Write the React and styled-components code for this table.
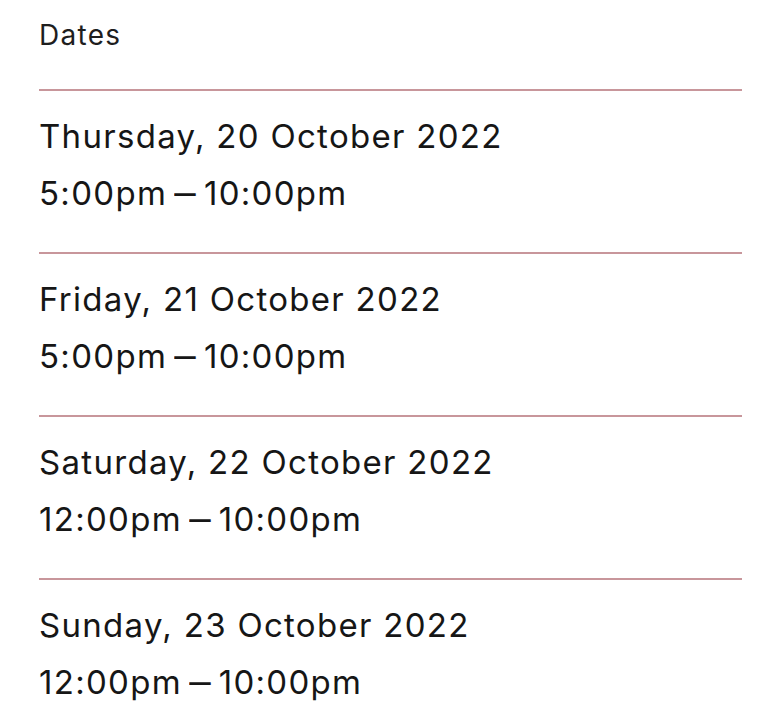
import React from "react";
import styled, { createGlobalStyle } from "styled-components";

const Global = createGlobalStyle`
  html, body { margin: 0; padding: 0; background: #ffffff; }
  body { font-family: Inter, "Liberation Sans", Arial, sans-serif; color: #1c1c1c; }
`;

const Page = styled.div`
  width: 776px;
  padding: 15px 34px 0 39px;
  box-sizing: border-box;
`;

const Heading = styled.h2`
  margin: 0;
  font-size: 28px;
  font-weight: 400;
  letter-spacing: 1.3px;
  line-height: 40px;
  height: 74px;
  color: #1e1e1e;
`;

const List = styled.ul`
  list-style: none;
  margin: 0;
  padding: 0;
`;

const Row = styled.li`
  border-top: 2px solid #c8969b;
  padding: 17px 0 30px;
`;

const Line = styled.div`
  font-size: 33px;
  line-height: 57px;
  font-weight: 400;
  letter-spacing: 1.3px;
  color: #161616;
  white-space: nowrap;
`;

const Dash = styled.span`
  display: inline-block;
  margin: 0 9px 0 10px;
  transform: scaleX(1.3);
`;

const dates = [
  ["Thursday, 20 October 2022", "5:00pm", "10:00pm"],
  ["Friday, 21 October 2022", "5:00pm", "10:00pm"],
  ["Saturday, 22 October 2022", "12:00pm", "10:00pm"],
  ["Sunday, 23 October 2022", "12:00pm", "10:00pm"],
];

export default function App() {
  return (
    <>
      <Global />
      <Page>
        <Heading>Dates</Heading>
        <List>
          {dates.map(([d, from, to]) => (
            <Row key={d}>
              <Line>{d}</Line>
              <Line>
                {from}
                <Dash>–</Dash>
                {to}
              </Line>
            </Row>
          ))}
        </List>
      </Page>
    </>
  );
}
